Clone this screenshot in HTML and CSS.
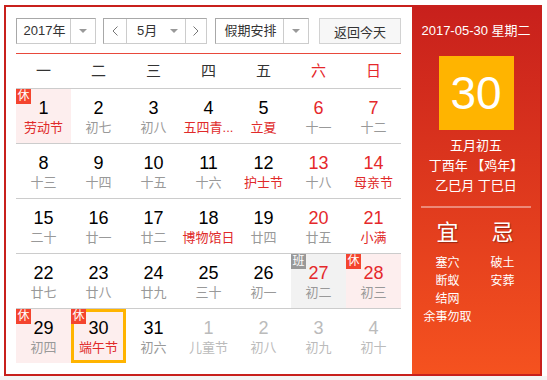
FILE: index.html
```html
<!DOCTYPE html>
<html lang="zh-CN">
<head>
    <meta charset="UTF-8">
    <title>万年历</title>
    <link rel="stylesheet" href="styles.css">
</head>
<body>
    <div class="calendar">
        <div class="main">
            <div class="toolbar">
                <div class="select year">
                    <span class="select-text">2017年</span>
                    <span class="select-arrow"><i></i></span>
                </div>
                <div class="select month">
                    <span class="month-btn">
                        <svg width="6" height="10" viewBox="0 0 6 10"><polyline points="5.5,0.5 1,5 5.5,9.5" fill="none" stroke="#777" stroke-width="1"/></svg>
                    </span>
                    <span class="select-text">5月</span>
                    <span class="select-arrow plain"><i></i></span>
                    <span class="month-btn next">
                        <svg width="6" height="10" viewBox="0 0 6 10"><polyline points="0.5,0.5 5,5 0.5,9.5" fill="none" stroke="#777" stroke-width="1"/></svg>
                    </span>
                </div>
                <div class="select holiday">
                    <span class="select-text">假期安排</span>
                    <span class="select-arrow"><i></i></span>
                </div>
                <button class="today-btn">返回今天</button>
            </div>

            <div class="weekdays">
                <span>一</span><span>二</span><span>三</span><span>四</span><span>五</span>
                <span class="weekend">六</span><span class="weekend">日</span>
            </div>

            <div class="week">
                <div class="day rest"><b class="badge">休</b><div class="num">1</div><div class="lunar fest">劳动节</div></div>
                <div class="day"><div class="num">2</div><div class="lunar">初七</div></div>
                <div class="day"><div class="num">3</div><div class="lunar">初八</div></div>
                <div class="day"><div class="num">4</div><div class="lunar fest">五四青...</div></div>
                <div class="day"><div class="num">5</div><div class="lunar fest">立夏</div></div>
                <div class="day weekend"><div class="num">6</div><div class="lunar">十一</div></div>
                <div class="day weekend"><div class="num">7</div><div class="lunar">十二</div></div>
            </div>
            <div class="week">
                <div class="day"><div class="num">8</div><div class="lunar">十三</div></div>
                <div class="day"><div class="num">9</div><div class="lunar">十四</div></div>
                <div class="day"><div class="num">10</div><div class="lunar">十五</div></div>
                <div class="day"><div class="num">11</div><div class="lunar">十六</div></div>
                <div class="day"><div class="num">12</div><div class="lunar fest">护士节</div></div>
                <div class="day weekend"><div class="num">13</div><div class="lunar">十八</div></div>
                <div class="day weekend"><div class="num">14</div><div class="lunar fest">母亲节</div></div>
            </div>
            <div class="week">
                <div class="day"><div class="num">15</div><div class="lunar">二十</div></div>
                <div class="day"><div class="num">16</div><div class="lunar">廿一</div></div>
                <div class="day"><div class="num">17</div><div class="lunar">廿二</div></div>
                <div class="day"><div class="num">18</div><div class="lunar fest">博物馆日</div></div>
                <div class="day"><div class="num">19</div><div class="lunar">廿四</div></div>
                <div class="day weekend"><div class="num">20</div><div class="lunar">廿五</div></div>
                <div class="day weekend"><div class="num">21</div><div class="lunar fest">小满</div></div>
            </div>
            <div class="week">
                <div class="day"><div class="num">22</div><div class="lunar">廿七</div></div>
                <div class="day"><div class="num">23</div><div class="lunar">廿八</div></div>
                <div class="day"><div class="num">24</div><div class="lunar">廿九</div></div>
                <div class="day"><div class="num">25</div><div class="lunar">三十</div></div>
                <div class="day"><div class="num">26</div><div class="lunar">初一</div></div>
                <div class="day weekend work"><b class="badge">班</b><div class="num">27</div><div class="lunar">初二</div></div>
                <div class="day weekend rest"><b class="badge">休</b><div class="num">28</div><div class="lunar">初三</div></div>
            </div>
            <div class="week">
                <div class="day rest"><b class="badge">休</b><div class="num">29</div><div class="lunar">初四</div></div>
                <div class="day rest today"><b class="badge">休</b><div class="num">30</div><div class="lunar fest">端午节</div></div>
                <div class="day"><div class="num">31</div><div class="lunar">初六</div></div>
                <div class="day other"><div class="num">1</div><div class="lunar">儿童节</div></div>
                <div class="day other"><div class="num">2</div><div class="lunar">初八</div></div>
                <div class="day other"><div class="num">3</div><div class="lunar">初九</div></div>
                <div class="day other"><div class="num">4</div><div class="lunar">初十</div></div>
            </div>
        </div>

        <div class="side">
            <div class="side-date">2017-05-30 星期二</div>
            <div class="side-day">30</div>
            <div class="side-lunar">
                <p>五月初五</p>
                <p>丁酉年 【鸡年】</p>
                <p>乙巳月 丁巳日</p>
            </div>
            <div class="side-line"></div>
            <div class="yiji">
                <div class="yiji-col">
                    <h3>宜</h3>
                    <p>塞穴</p>
                    <p>断蚁</p>
                    <p>结网</p>
                    <p>余事勿取</p>
                </div>
                <div class="yiji-col">
                    <h3>忌</h3>
                    <p>破土</p>
                    <p>安葬</p>
                </div>
            </div>
        </div>
    </div>
    <div class="scrollbar"></div>
</body>
</html>
```

FILE: styles.css
```css
body {
    margin: 0;
    background-color: #fff;
    font-family: "Liberation Sans", "Noto Sans CJK SC", sans-serif;
    color: #333;
}
.calendar {
    display: flex;
    width: 534px;
    height: 367px;
    margin: 5px 0 0 4px;
    border: 2px solid #c8201c;
}
.main {
    width: 385px;
    padding: 11px 11px 0 10px;
}

/* toolbar */
.toolbar {
    display: flex;
    height: 26px;
    padding-bottom: 9px;
    border-bottom: 1px solid #e8493b;
}
.select {
    display: flex;
    box-sizing: border-box;
    height: 26px;
    border: 1px solid #ccc;
    border-top-color: #a8a8a8;
    border-left-color: #a8a8a8;
    background-color: #fff;
    font-size: 13px;
    line-height: 24px;
}
.select-text {
    flex: 1;
    text-align: center;
}
.select-arrow {
    display: flex;
    align-items: center;
    justify-content: center;
    width: 24px;
    border-left: 1px solid #ccc;
}
.select-arrow i {
    width: 0;
    height: 0;
    border-left: 4px solid transparent;
    border-right: 4px solid transparent;
    border-top: 4px solid #999;
}
.year {
    width: 80px;
}
.year .select-text {
    padding-left: 2px;
}
.month {
    width: 104px;
    margin-left: 7px;
}
.month .select-text {
    text-align: left;
    padding-left: 10px;
}
.month .select-arrow.plain {
    border-left: none;
    width: 22px;
}
.month-btn {
    display: flex;
    align-items: center;
    justify-content: center;
    width: 22px;
    border-right: 1px solid #ccc;
}
.month-btn.next {
    border-right: none;
    border-left: 1px solid #ccc;
    width: 20px;
}
.holiday {
    width: 94px;
    margin-left: 8px;
}
.holiday .select-text {
    padding-left: 2px;
}
.today-btn {
    width: 82px;
    height: 26px;
    margin-left: 10px;
    padding: 0;
    border: 1px solid #d2d2d2;
    background-color: #f7f7f7;
    font-family: inherit;
    font-size: 13px;
    color: #333;
}

/* grid */
.weekdays {
    display: grid;
    grid-template-columns: repeat(7, 55px);
    height: 34px;
    line-height: 34px;
    border-bottom: 1px solid #ccc;
    font-size: 15px;
    text-align: center;
    color: #333;
}
.weekdays .weekend {
    color: #e5282b;
}
.week {
    display: grid;
    grid-template-columns: repeat(7, 55px);
    height: 54px;
    border-bottom: 1px solid #ccc;
}
.week:last-child {
    border-bottom: none;
}
.day {
    position: relative;
    box-sizing: border-box;
    height: 54px;
    padding-top: 9px;
    text-align: center;
}
.num {
    font-size: 18px;
    line-height: 20px;
    color: #000;
}
.lunar {
    margin-top: 2px;
    font-size: 13px;
    line-height: 16px;
    color: #999;
    white-space: nowrap;
}
.lunar.fest {
    color: #e02a2a;
}
.day.weekend .num {
    color: #e5282b;
}
.day.rest {
    background-color: #fdeeee;
}
.day.work {
    background-color: #f2f2f2;
}
.day.other .num,
.day.other .lunar {
    color: #bbb;
}
.day.today {
    padding-top: 6px;
    border: 3px solid #ffb400;
}
.badge {
    position: absolute;
    top: 0;
    left: 0;
    width: 15px;
    height: 15px;
    background-color: #f4442e;
    color: #fff;
    font-size: 12px;
    font-weight: normal;
    line-height: 15px;
    text-align: center;
}
.day.today .badge {
    top: -3px;
    left: -3px;
}
.day.work .badge {
    background-color: #999;
}

/* side panel */
.side {
    width: 128px;
    background: linear-gradient(to bottom, #c8201c, #f5521f);
    color: #fff;
    text-align: center;
}
.side-date {
    margin-top: 16px;
    font-size: 13px;
    line-height: 16px;
}
.side-day {
    width: 75px;
    height: 74px;
    margin: 17px auto 0;
    background-color: #ffb400;
    font-size: 46px;
    line-height: 74px;
}
.side-lunar {
    margin-top: 6px;
    font-size: 13px;
    line-height: 20px;
}
.side-lunar p {
    margin: 0;
}
.side-line {
    width: 110px;
    height: 2px;
    margin: 10px auto 0;
    background-color: rgba(255, 255, 255, 0.4);
}
.yiji {
    display: flex;
    justify-content: center;
    margin-top: 12px;
    padding-right: 2px;
}
.yiji-col {
    width: 55px;
}
.yiji h3 {
    margin: 0 0 8px;
    font-size: 22px;
    font-weight: normal;
    line-height: 26px;
    text-shadow: 1px 1px 1px rgba(0, 0, 0, 0.35);
}
.yiji p {
    margin: 0;
    font-size: 12px;
    line-height: 18px;
    white-space: nowrap;
}
.scrollbar {
    height: 10px;
    background-color: #f4f4f4;
}
```
